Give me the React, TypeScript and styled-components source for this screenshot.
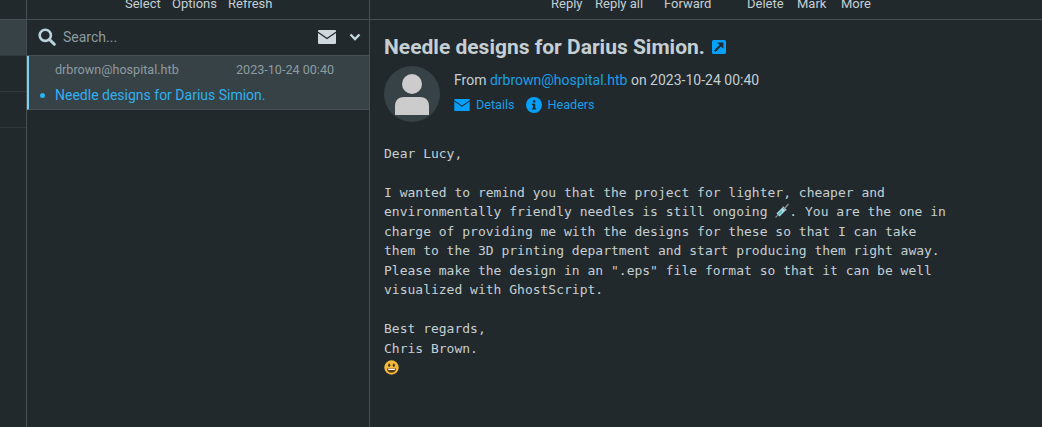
import React from "react";
import styled, { createGlobalStyle } from "styled-components";

const Global = createGlobalStyle`
  html, body { margin: 0; padding: 0; background: #21292d; height: 100%; overflow: hidden; }
  #root { height: 427px; }
  * { box-sizing: border-box; }
`;

const Page = styled.div`
  display: grid;
  grid-template-columns: 27px 343px 1fr;
  width: 1042px;
  height: 427px;
  background: #21292d;
  color: #c5cfd3;
  font-family: Roboto, "Liberation Sans", sans-serif;
  font-size: 13px;
  overflow: hidden;
`;

const Rail = styled.div`
  border-right: 1px solid #465155;
  display: flex;
  flex-direction: column;
`;

const RailTop = styled.div`
  height: 20px;
  border-bottom: 1px solid #465155;
`;

const RailRow = styled.div<{ $active?: boolean }>`
  height: 36px;
  border-bottom: 1px solid #2e383c;
  background: ${(p) => (p.$active ? "#374246" : "transparent")};
`;

const ListColumn = styled.div`
  border-right: 1px solid #465155;
  display: flex;
  flex-direction: column;
`;

const Toolbar = styled.div<{ $pad?: number }>`
  height: 20px;
  border-bottom: 1px solid #465155;
  display: flex;
  align-items: flex-end;
  padding-left: ${(p) => p.$pad ?? 0}px;
  padding-bottom: 8px;
  overflow: hidden;
`;

const ToolLabel = styled.span<{ $w: number }>`
  display: block;
  width: ${(p) => p.$w}px;
  flex: none;
  line-height: 15px;
  color: #c5cfd3;
  white-space: nowrap;
`;

const SearchBar = styled.div`
  height: 36px;
  display: flex;
  align-items: center;
  padding: 0 8px 1px 11px;
  border-bottom: 1px solid #465155;
`;

const SearchText = styled.span`
  flex: 1;
  margin-left: 7px;
  font-size: 14px;
  color: #8d9ca1;
`;

const MessageItem = styled.div`
  height: 54px;
  background: #374246;
  border-left: 2px solid #7fd0f5;
  border-bottom: 1px solid #465155;
  padding: 0 0 0 11px;
  display: flex;
  flex-direction: column;
`;

const MetaRow = styled.div`
  display: flex;
  height: 26px;
  align-items: center;
  padding-left: 15px;
  color: #8d9ca1;
  font-size: 12.6px;
`;

const MetaFrom = styled.span`
  width: 181px;
`;

const SubjectRow = styled.div`
  display: flex;
  align-items: center;
  color: #2fb0ef;
  font-size: 14px;
  height: 25px;
`;

const Dot = styled.span`
  width: 5px;
  height: 5px;
  border-radius: 50%;
  background: #2fb0ef;
  margin-right: 10px;
  margin-top: 1px;
`;

const Reader = styled.div`
  display: flex;
  flex-direction: column;
`;

const ReaderBody = styled.div`
  padding: 15px 14px 0;
`;

const Title = styled.h1`
  margin: 0;
  font-size: 21px;
  line-height: 24px;
  font-weight: 700;
  color: #c5cfd3;
  display: flex;
  align-items: center;
  gap: 7px;
`;

const Head = styled.div`
  display: flex;
  margin-top: 7px;
  gap: 14px;
`;

const Avatar = styled.div`
  width: 56px;
  height: 56px;
  border-radius: 50%;
  background: #374246;
  display: flex;
  align-items: center;
  justify-content: center;
  flex: none;
`;

const HeadText = styled.div`
  display: flex;
  flex-direction: column;
  padding-top: 5px;
`;

const FromLine = styled.div`
  font-size: 14px;
  line-height: 19px;
  color: #c5cfd3;
`;

const Link = styled.span`
  color: #1b9fe6;
`;

const ActionRow = styled.div`
  display: flex;
  margin-top: 7px;
  gap: 11px;
  font-size: 12.6px;
  line-height: 16px;
`;

const Action = styled.span`
  display: flex;
  align-items: center;
  gap: 6px;
  color: #1b9fe6;
`;

const Mail = styled.pre`
  margin: 21.75px 0 0;
  font-family: "DejaVu Sans Mono", monospace;
  font-size: 13px;
  line-height: 19.5px;
  color: #c5cfd3;
  white-space: pre-wrap;
`;

const InlineIcon = styled.svg`
  display: inline-block;
  vertical-align: -2px;
  overflow: visible;
`;

const SearchIcon = () => (
  <svg width="18" height="18" viewBox="0 0 18 18" fill="none">
    <circle cx="7.3" cy="7.3" r="5.6" stroke="#b9d3dd" strokeWidth="2.6" />
    <path d="M11.5 11.5L16.3 16.3" stroke="#b9d3dd" strokeWidth="3" strokeLinecap="round" />
  </svg>
);

const EnvelopeIcon = ({ w, h, color, line }: { w: number; h: number; color: string; line: string }) => (
  <svg width={w} height={h} viewBox="0 0 18 14">
    <rect x="0" y="0" width="18" height="14" rx="1" fill={color} />
    <path d="M0 2.2L9 8.4L18 2.2" fill="none" stroke={line} strokeWidth="1.2" />
  </svg>
);

const Chevron = () => (
  <svg width="12" height="8" viewBox="0 0 12 8" fill="none" style={{ marginLeft: 13 }}>
    <path d="M1.5 1.5L6 6L10.5 1.5" stroke="#c5d8df" strokeWidth="2.4" />
  </svg>
);

const ExternalIcon = () => (
  <svg width="14" height="14" viewBox="0 0 14 14">
    <rect width="14" height="14" rx="1.5" fill="#04a0fb" />
    <path d="M2.8 11.2L9.2 4.8" stroke="#21292d" strokeWidth="2.1" />
    <path d="M5.2 2.6H11.4V8.8Z" fill="#21292d" />
  </svg>
);

const PersonIcon = () => (
  <svg width="36" height="41" viewBox="0 0 36 41">
    <circle cx="18" cy="10" r="10" fill="#cccccc" />
    <path d="M1 41V32C1 26 5 23 10 23H26C31 23 35 26 35 32V41Z" fill="#cccccc" />
  </svg>
);

const InfoIcon = () => (
  <svg width="16" height="16" viewBox="0 0 16 16">
    <circle cx="8" cy="8" r="8" fill="#04a0fb" />
    <rect x="6.9" y="3.3" width="2.4" height="2.2" fill="#21292d" />
    <path d="M6 6.8H9.2V11.2H10.2V12.6H6V11.2H7V8.2H6Z" fill="#21292d" />
  </svg>
);

const Syringe = () => (
  <InlineIcon width="14" height="12" viewBox="0 0 14 12">
    <path d="M0.5 11.5L3 9" stroke="#7b8a90" strokeWidth="1.1" />
    <path d="M3 9L9 3" stroke="#a9dce4" strokeWidth="4.4" />
    <path d="M3.4 8.6L7 5" stroke="#62b7c4" strokeWidth="2" />
    <path d="M7.6 0.6L11.4 4.4" stroke="#c7d0d3" strokeWidth="1.2" />
    <path d="M9.5 2.5L13.5 -2" stroke="#84939a" strokeWidth="1.2" />
  </InlineIcon>
);

const Smiley = () => (
  <InlineIcon width="15" height="12" viewBox="0 0 15 12">
    <g transform="translate(0 -2)">
      <circle cx="7.5" cy="7.5" r="7.2" fill="#f1b93a" />
      <ellipse cx="5.2" cy="5.2" rx="1.1" ry="1.7" fill="#4d3a1c" />
      <ellipse cx="9.8" cy="5.2" rx="1.1" ry="1.7" fill="#4d3a1c" />
      <path d="M3 8.4H12C12 11 10 12.8 7.5 12.8C5 12.8 3 11 3 8.4Z" fill="#5a3d20" />
      <path d="M4 8.8H11L10.6 10H4.4Z" fill="#f5f5f5" />
    </g>
  </InlineIcon>
);

export default function App() {
  return (
    <Page>
      <Global />
      <Rail>
        <RailTop />
        <RailRow $active />
        <RailRow />
        <RailRow />
      </Rail>
      <ListColumn>
        <Toolbar $pad={98}>
          <ToolLabel $w={47}>Select</ToolLabel>
          <ToolLabel $w={56}>Options</ToolLabel>
          <ToolLabel $w={48}>Refresh</ToolLabel>
        </Toolbar>
        <SearchBar>
          <SearchIcon />
          <SearchText>Search...</SearchText>
          <EnvelopeIcon w={18} h={14} color="#cfd9dd" line="#21292d" />
          <Chevron />
        </SearchBar>
        <MessageItem>
          <MetaRow>
            <MetaFrom>drbrown@hospital.htb</MetaFrom>
            <span>2023-10-24 00:40</span>
          </MetaRow>
          <SubjectRow>
            <Dot />
            Needle designs for Darius Simion.
          </SubjectRow>
        </MessageItem>
      </ListColumn>
      <Reader>
        <Toolbar $pad={181}>
          <ToolLabel $w={44}>Reply</ToolLabel>
          <ToolLabel $w={69}>Reply all</ToolLabel>
          <ToolLabel $w={83}>Forward</ToolLabel>
          <ToolLabel $w={50}>Delete</ToolLabel>
          <ToolLabel $w={44}>Mark</ToolLabel>
          <ToolLabel $w={40}>More</ToolLabel>
        </Toolbar>
        <ReaderBody>
          <Title>
            Needle designs for Darius Simion.
            <ExternalIcon />
          </Title>
          <Head>
            <Avatar>
              <PersonIcon />
            </Avatar>
            <HeadText>
              <FromLine>
                From <Link>drbrown@hospital.htb</Link> on 2023-10-24 00:40
              </FromLine>
              <ActionRow>
                <Action>
                  <EnvelopeIcon w={16} h={12} color="#04a0fb" line="#21292d" />
                  Details
                </Action>
                <Action>
                  <InfoIcon />
                  Headers
                </Action>
              </ActionRow>
            </HeadText>
          </Head>
          <Mail>
            {"Dear Lucy,\n\nI wanted to remind you that the project for lighter, cheaper and\nenvironmentally friendly needles is still ongoing "}
            <Syringe />
            {". You are the one in\ncharge of providing me with the designs for these so that I can take\nthem to the 3D printing department and start producing them right away.\nPlease make the design in an \".eps\" file format so that it can be well\nvisualized with GhostScript.\n\nBest regards,\nChris Brown.\n"}
            <Smiley />
          </Mail>
        </ReaderBody>
      </Reader>
    </Page>
  );
}
